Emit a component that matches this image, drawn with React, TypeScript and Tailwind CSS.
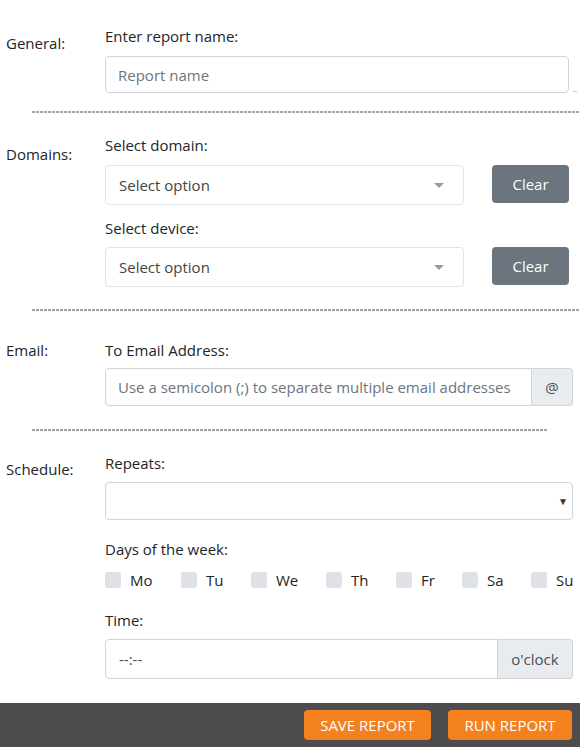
import React from "react";

const font = { fontFamily: '"Open Sans", "Noto Sans", sans-serif' };

function Separator({ short }: { short?: boolean }) {
  return (
    <div
      className={
        "ml-[32px] h-[2px] bg-[linear-gradient(to_right,#a3a3a3_3px,transparent_3px)] bg-[length:4px_2px] " +
        (short ? "mr-[33px]" : "")
      }
    />
  );
}

function SelectBox() {
  return (
    <div className="flex h-[40px] w-[359px] items-center justify-between rounded-[4px] border border-[#e3e3e3] bg-white pl-[13px] pr-[19px] text-[#444]">
      <span>Select option</span>
      <span className="h-0 w-0 border-x-[5px] border-t-[5px] border-x-transparent border-t-[#9b9b9b]" />
    </div>
  );
}

function ClearButton() {
  return (
    <button className="ml-[28px] h-[38px] w-[77px] rounded-[4px] bg-[#6c757d] text-white">
      Clear
    </button>
  );
}

const days = [
  { d: "Mo", w: "w-[76px]" },
  { d: "Tu", w: "w-[70px]" },
  { d: "We", w: "w-[75px]" },
  { d: "Th", w: "w-[70px]" },
  { d: "Fr", w: "w-[66px]" },
  { d: "Sa", w: "w-[69px]" },
  { d: "Su", w: "" },
];

export default function App() {
  return (
    <div
      className="flex h-[747px] w-[580px] flex-col bg-white text-[15px] leading-[22px] text-[#212529]"
      style={font}
    >
      {/* General */}
      <div className="flex pt-[25px]">
        <div className="w-[105px] pl-[6px] pt-[7px]">General:</div>
        <div className="flex-1">
          <div>Enter report name:</div>
          <div className="mt-[9px] flex items-end">
            <div className="flex h-[37px] w-[464px] items-center rounded-[4px] border border-[#ced4da] pl-[12px] text-[#6c757d]">
              Report name
            </div>
            <div className="mb-[1px] ml-[4px] h-px w-[4px] bg-[#ccc]" />
          </div>
        </div>
      </div>
      <div className="mt-[18px]">
        <Separator />
      </div>

      {/* Domains */}
      <div className="flex pt-[21px]">
        <div className="w-[105px] pl-[6px] pt-[9px]">Domains:</div>
        <div className="flex-1">
          <div>Select domain:</div>
          <div className="mt-[9px] flex">
            <SelectBox />
            <ClearButton />
          </div>
          <div className="mt-[12px]">Select device:</div>
          <div className="mt-[8px] flex">
            <SelectBox />
            <ClearButton />
          </div>
        </div>
      </div>
      <div className="mt-[22px]">
        <Separator />
      </div>

      {/* Email */}
      <div className="flex pt-[28px]">
        <div className="w-[105px] pl-[6px]">Email:</div>
        <div className="flex-1">
          <div>To Email Address:</div>
          <div className="mt-[7px] flex h-[38px] w-[468px]">
            <div className="flex flex-1 items-center rounded-l-[4px] border border-[#ced4da] pl-[12px] text-[#6c757d]">
              Use a semicolon (;) to separate multiple email addresses
            </div>
            <div className="flex w-[41px] items-center justify-center rounded-r-[4px] border border-l-0 border-[#ced4da] bg-[#e9ecef] text-[#495057]">
              @
            </div>
          </div>
        </div>
      </div>
      <div className="mt-[23px]">
        <Separator short />
      </div>

      {/* Schedule */}
      <div className="flex pt-[21px]">
        <div className="w-[105px] pl-[6px] pt-[6px]">Schedule:</div>
        <div className="flex-1">
          <div>Repeats:</div>
          <div className="mt-[8px] flex h-[38px] w-[468px] items-center justify-end rounded-[4px] border border-[#ced4da] pr-[4px] text-[10px] text-[#333]">
            ▼
          </div>
          <div className="mt-[18px]">Days of the week:</div>
          <div className="mt-[9px] flex items-center">
            {days.map((x) => (
              <div key={x.d} className={"flex items-center " + x.w}>
                <span className="h-[16px] w-[16px] rounded-[3px] bg-[#dee2e6]" />
                <span className="ml-[9px]">{x.d}</span>
              </div>
            ))}
          </div>
          <div className="mt-[18px]">Time:</div>
          <div className="mt-[8px] flex h-[40px] w-[468px]">
            <div className="flex flex-1 items-center rounded-l-[4px] border border-[#ced4da] pl-[13px] text-[#495057]">
              --:--
            </div>
            <div className="flex w-[75px] items-center justify-center rounded-r-[4px] border border-l-0 border-[#ced4da] bg-[#e9ecef] text-[#495057]">
              o'clock
            </div>
          </div>
        </div>
      </div>

      {/* Footer */}
      <div className="mt-auto flex h-[44px] items-center justify-end gap-[17px] bg-[#4d4d4d] pr-[8px]">
        <button className="h-[30px] w-[127px] rounded-[4px] bg-[#f48120] text-white">
          SAVE REPORT
        </button>
        <button className="h-[30px] w-[124px] rounded-[4px] bg-[#f48120] text-white">
          RUN REPORT
        </button>
      </div>
    </div>
  );
}
